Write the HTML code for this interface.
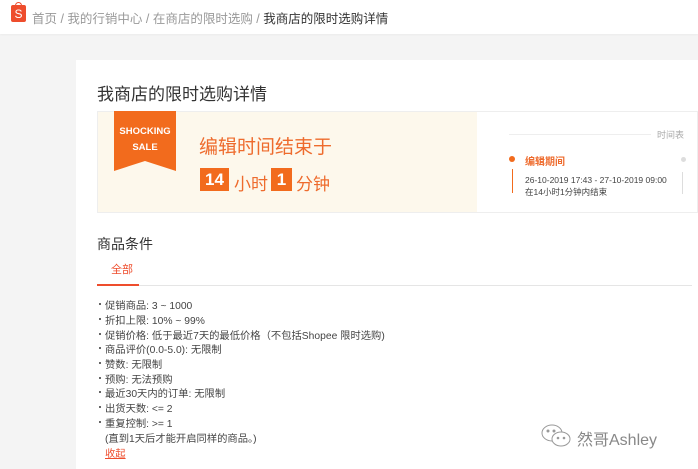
<!DOCTYPE html>
<html><head><meta charset="utf-8"><style>
*{margin:0;padding:0;box-sizing:border-box}
body{width:698px;height:469px;overflow:hidden;background:#f4f4f4;font-family:"Liberation Sans","Noto Sans CJK SC",sans-serif;position:relative}
.top{position:absolute;left:0;top:0;width:698px;height:34px;background:#fff;box-shadow:0 1px 2px rgba(0,0,0,0.04)}
.abs{position:absolute;white-space:nowrap}
.card{position:absolute;left:76px;top:60px;width:622px;height:409px;background:#fff}
.li{position:absolute;left:99px;font-size:10.3px;color:#444;white-space:nowrap}
.li:before{content:"";position:absolute;left:0;top:6px;width:2px;height:2px;background:#666}
.li span{margin-left:6px}
</style></head><body>
<div class="top"></div>
<div class="abs" style="left:11px;top:5px;width:15px;height:17px;background:#ee4d2d;border-radius:2px;color:#fff;font-size:12px;text-align:center;line-height:18px">S</div>
<div class="abs" style="left:15px;top:2px;width:7px;height:5px;border:1.5px solid #ee4d2d;border-bottom:none;border-radius:4px 4px 0 0"></div>
<div class="abs" style="left:32px;top:8px;font-size:12.5px;color:#999">首页 / 我的行销中心 / 在商店的限时选购 / <span style="color:#333">我商店的限时选购详情</span></div>
<div class="card"></div>
<div class="abs" style="left:97px;top:80px;font-size:17px;color:#333">我商店的限时选购详情</div>
<div class="abs" style="left:97px;top:111px;width:601px;height:102px;border:1px solid #eee;background:#fff"></div>
<div class="abs" style="left:98px;top:112px;width:379px;height:100px;background:#fdf8ec"></div>
<svg class="abs" style="left:114px;top:111px" width="62" height="60"><polygon points="0,0 62,0 62,60 31,50 0,60" fill="#f26b1d"/></svg>
<div class="abs" style="left:114px;top:124px;width:62px;text-align:center;font-size:9.5px;font-weight:bold;color:#fff;line-height:16px">SHOCKING<br>SALE</div>
<div class="abs" style="left:199px;top:132px;font-size:19px;color:#ee6b2d">编辑时间结束于</div>
<div class="abs" style="left:200px;top:168px;width:29px;height:23px;background:#f26b1d;color:#fff;font-weight:bold;font-size:17px;text-align:center;line-height:23px">14</div>
<div class="abs" style="left:234px;top:170px;font-size:17px;color:#ee6b2d">小时</div>
<div class="abs" style="left:271px;top:168px;width:21px;height:23px;background:#f26b1d;color:#fff;font-weight:bold;font-size:17px;text-align:center;line-height:23px">1</div>
<div class="abs" style="left:296px;top:170px;font-size:17px;color:#ee6b2d">分钟</div>
<div class="abs" style="left:509px;top:134px;width:142px;height:1px;background:#eee"></div>
<div class="abs" style="left:657px;top:128px;font-size:9px;color:#aaa">时间表</div>
<div class="abs" style="left:509px;top:156px;width:6px;height:6px;border-radius:50%;background:#f26b1d"></div>
<div class="abs" style="left:681px;top:157px;width:5px;height:5px;border-radius:50%;background:#ddd"></div>
<div class="abs" style="left:525px;top:153px;font-size:10px;font-weight:bold;color:#ee6b2d">编辑期间</div>
<div class="abs" style="left:512px;top:169px;width:1px;height:24px;background:#f26b1d"></div>
<div class="abs" style="left:682px;top:172px;width:1px;height:22px;background:#ddd"></div>
<div class="abs" style="left:525px;top:174px;font-size:8.5px;color:#444;line-height:12px">26-10-2019 17:43 - 27-10-2019 09:00<br>在14小时1分钟内结束</div>
<div class="abs" style="left:97px;top:234px;font-size:14px;color:#333">商品条件</div>
<div class="abs" style="left:111px;top:261px;font-size:11px;color:#ee4d2d">全部</div>
<div class="abs" style="left:97px;top:285px;width:595px;height:1px;background:#e5e5e5"></div>
<div class="abs" style="left:97px;top:284px;width:42px;height:2px;background:#ee4d2d"></div>
<div class="li" style="top:297px"><span>促销商品: 3 ~ 1000</span></div>
<div class="li" style="top:312px"><span>折扣上限: 10% ~ 99%</span></div>
<div class="li" style="top:327px"><span>促销价格: 低于最近7天的最低价格（不包括Shopee 限时选购)</span></div>
<div class="li" style="top:341px"><span>商品评价(0.0-5.0): 无限制</span></div>
<div class="li" style="top:356px"><span>赞数: 无限制</span></div>
<div class="li" style="top:371px"><span>预购: 无法预购</span></div>
<div class="li" style="top:385px"><span>最近30天内的订单: 无限制</span></div>
<div class="li" style="top:400px"><span>出货天数: &lt;= 2</span></div>
<div class="li" style="top:415px"><span>重复控制: &gt;= 1</span></div>
<div class="abs" style="left:105px;top:430px;font-size:10.3px;color:#444">(直到1天后才能开启同样的商品。)</div>
<div class="abs" style="left:105px;top:445px;font-size:10.3px;color:#ee4d2d;text-decoration:underline">收起</div>
<svg class="abs" style="left:541px;top:424px" width="32" height="26" fill="none" stroke="#999" stroke-width="1"><ellipse cx="11" cy="9" rx="10" ry="8"/><ellipse cx="20" cy="15" rx="9" ry="7" fill="#fff"/><circle cx="7" cy="7" r="1" fill="#999"/><circle cx="13" cy="7" r="1" fill="#999"/><circle cx="17" cy="14" r="0.8" fill="#999"/><circle cx="23" cy="14" r="0.8" fill="#999"/></svg>
<div class="abs" style="left:577px;top:426px;font-size:16px;color:#888">然哥Ashley</div>
</body></html>
